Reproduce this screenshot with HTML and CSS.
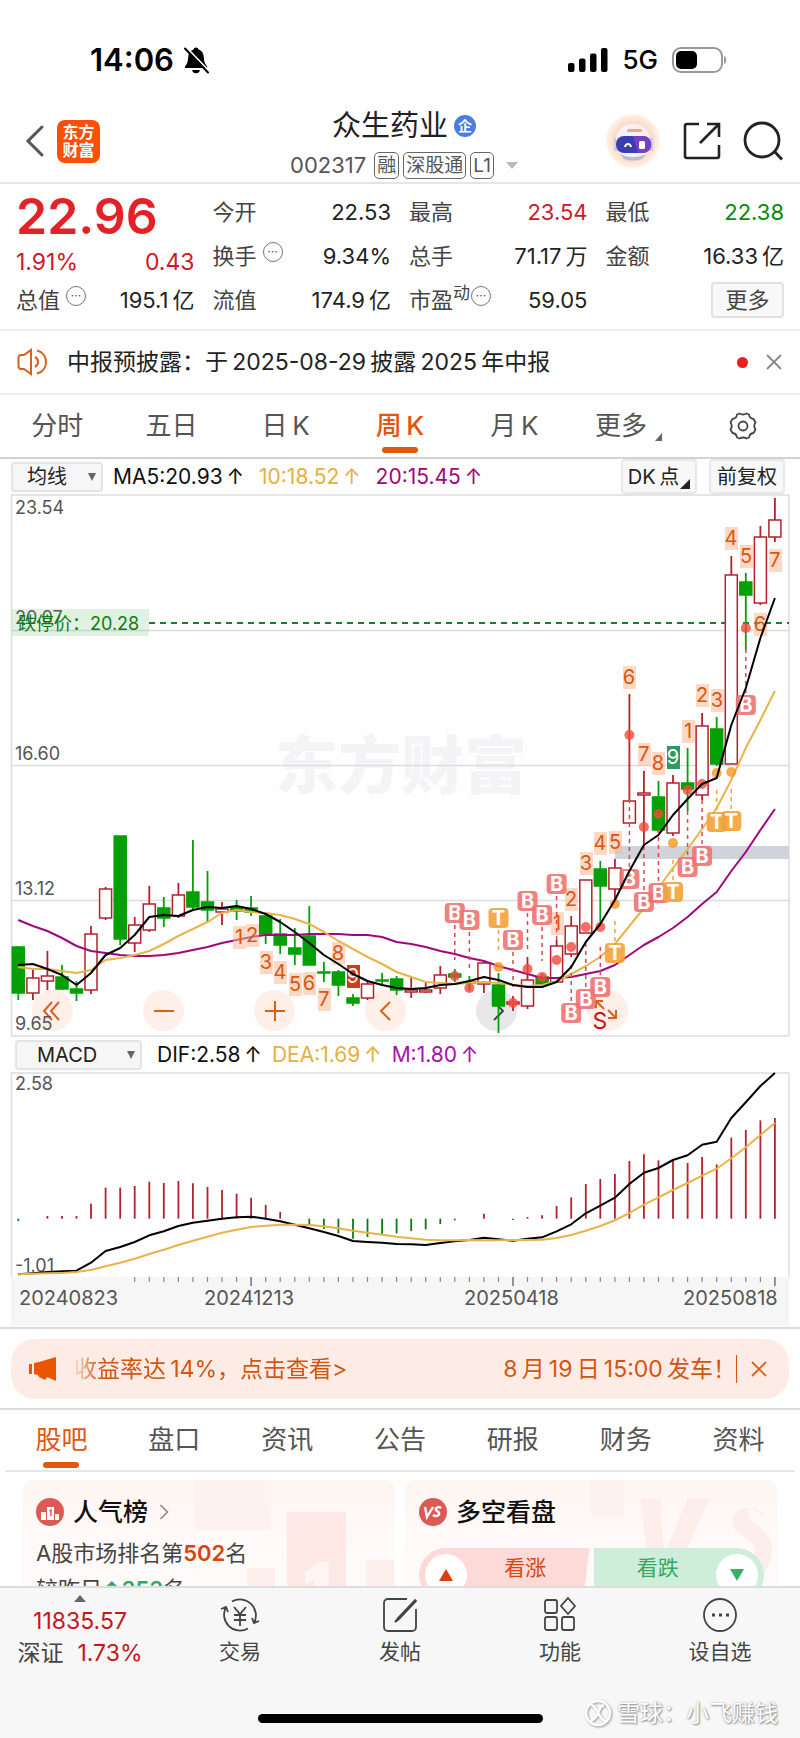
FILE: index.html
```html
<!DOCTYPE html>
<html lang="zh-CN">
<head>
<meta charset="utf-8">
<meta name="viewport" content="width=device-width, initial-scale=1">
<title>众生药业 002317</title>
<link rel="stylesheet" href="styles.css">
</head>
<body>
<div class="app">
  <div class="status">
    <div class="status-left">
      <span class="time">14:06</span>
      <svg class="bell" viewBox="0 0 28 28" width="28" height="28"><path d="M14 1.500c1.300 0 2.200.8 2.500 2 3.600 1.200 5.200 4.200 5.400 8.500.1 3.800 1 5.600 3.200 8.500v1.500H3v-1.500c2.200-2.900 3-4.700 3.100-8.500.2-4.300 1.800-7.300 5.400-8.500.3-1.200 1.200-2 2.500-2zM10 24h8c-.4 2-1.900 3.300-4 3.300S10.400 26 10 24z"/><path d="M5.500 2.500 27.500 25.500" stroke="#fefefe" stroke-width="1.800"/><path d="M3 2.500 26 26.500" stroke="#000" stroke-width="2" stroke-linecap="round"/></svg>
    </div>
    <div class="status-right">
      <svg viewBox="0 0 40 26" width="40" height="26"><rect x="0" y="16" width="6.500" height="9" rx="2"/><rect x="11" y="11.500" width="6.500" height="13.500" rx="2"/><rect x="22" y="6.500" width="6.500" height="18.500" rx="2"/><rect x="33" y="1" width="6.500" height="24" rx="2"/></svg>
      <span class="net">5G</span>
      <svg viewBox="0 0 56 26" width="56" height="26"><rect x="1" y="1" width="49" height="24" rx="8" fill="none" stroke="#999" stroke-width="2"/><path d="M52 9c3 .8 3 7.200 0 8z" fill="#999"/><rect x="4" y="4" width="21" height="18" rx="5"/></svg>
    </div>
  </div>

  <header class="header">
    <div class="header-side left">
      <button class="plain" aria-label="返回"><svg viewBox="0 0 20 34" width="20" height="34" fill="none" stroke="#555" stroke-width="3" stroke-linecap="round"><path d="M17 3 3 17l14 14"/></svg></button>
      <div class="logo"><span>东方</span><span>财富</span></div>
    </div>
    <div class="header-mid">
      <h1 class="name">众生药业<span class="corp">企</span></h1>
      <div class="code">002317<span class="tag first">融</span><span class="tag">深股通</span><span class="tag">L1</span><i class="tri-down"></i></div>
    </div>
    <div class="header-side right">
      <button class="plain" aria-label="智能助手"><svg viewBox="0 0 56 56" width="56" height="56"><defs><radialGradient id="halo"><stop offset=".7" stop-color="#fddcc8"/><stop offset="1" stop-color="#fff3ec"/></radialGradient></defs><circle cx="28" cy="28" r="27" fill="url(#halo)"/><path d="M9 25h6v13H9zM42 25h6v13h-6z" fill="#c9cbe0"/><path d="M28 11c11 0 17 7 17 17s-5 18-17 18-17-8-17-18 6-17 17-17z" fill="#f2f2f8"/><rect x="22" y="16" width="15" height="3" rx="1.500" fill="#f5a47c"/><path d="M15 41c7 4 19 4 26 0l-4 5c-5 2-13 2-18 0z" fill="#b9bed6"/><rect x="11" y="23" width="35" height="17" rx="8" fill="#3b3fae"/><path d="M28 23h10a8 8 0 0 1 0 17h-5z" fill="#8a3fc8" opacity=".8"/><path d="M20 34c1-4 5-4 6 0" fill="none" stroke="#fff" stroke-width="2"/><rect x="34" y="28" width="6" height="8" rx="1.500" fill="#fff"/></svg></button>
      <button class="plain" aria-label="分享"><svg viewBox="0 0 38 38" width="38" height="38" fill="none" stroke="#222" stroke-width="2.600"><path d="M16 2H4a2 2 0 0 0-2 2v30a2 2 0 0 0 2 2h30a2 2 0 0 0 2-2V23M17 21 36 2M24 2h12v13"/></svg></button>
      <button class="plain" aria-label="搜索"><svg viewBox="0 0 40 40" width="40" height="40" fill="none" stroke="#222" stroke-width="2.800"><circle cx="19" cy="19" r="17"/><path d="m31 30 8 8.500"/></svg></button>
    </div>
  </header>

  <main class="scroll">
    <section class="quote">
      <div class="price">22.96</div>
      <div class="cell"><span>今开</span><b>22.53</b></div>
      <div class="cell"><span>最高</span><b class="red">23.54</b></div>
      <div class="cell"><span>最低</span><b class="green">22.38</b></div>
      <div class="cell chg red"><b>1.91%</b><b>0.43</b></div>
      <div class="cell"><span>换手<i class="info">···</i></span><b>9.34%</b></div>
      <div class="cell"><span>总手</span><b>71.17&thinsp;万</b></div>
      <div class="cell"><span>金额</span><b>16.33&thinsp;亿</b></div>
      <div class="cell"><span>总值<i class="info">···</i></span><b>195.1&thinsp;亿</b></div>
      <div class="cell"><span>流值</span><b>174.9&thinsp;亿</b></div>
      <div class="cell"><span>市盈<sup>动</sup><i class="info">···</i></span><b>59.05</b></div>
      <div class="cell end"><button class="more">更多</button></div>
    </section>

    <section class="notice">
      <svg viewBox="0 0 32 28" width="32" height="28" fill="none" stroke="#d9601a" stroke-width="2"><path d="M14 2v24l-7-5H4a2.500 2.500 0 0 1-2.500-2.500v-9A2.500 2.500 0 0 1 4 7h3zM18 9c4 2 4 8 0 10M20 2.500c12 3 12 20 0 23"/></svg>
      <p>中报预披露：于&thinsp;2025-08-29&thinsp;披露&thinsp;2025&thinsp;年中报</p>
      <i class="dot"></i>
      <button class="plain" aria-label="关闭"><svg viewBox="0 0 16 16" width="16" height="16" stroke="#888" stroke-width="1.800"><path d="m1 1 14 14M15 1 1 15"/></svg></button>
    </section>

    <nav class="tabs period">
      <button>分时</button><button>五日</button><button>日&thinsp;K</button><button class="on">周&thinsp;K</button><button>月&thinsp;K</button>
      <button>更多<i class="corner"></i></button>
      <button aria-label="设置"><svg viewBox="0 0 30 30" width="30" height="30" fill="none" stroke="#444" stroke-width="1.800" stroke-linejoin="round"><path d="M11.500 2.500q3.500 2 7 0l2.500 1q.5 4 4.500 4.500l2 3.500q-2.500 3.500 0 7l-2 3.500q-4 .5-4.500 4.500l-2.500 1q-3.500-2-7 0l-2.500-1Q8.500 22.500 4.500 22l-2-3.500q2.500-3.500 0-7l2-3.500Q8.500 7.500 9 3.500z"/><circle cx="15" cy="15" r="4.500"/></svg></button>
    </nav>

    <section class="bar">
      <label class="pick ma"><select aria-label="主图指标"><option>均线</option></select><i></i></label>
      <span class="m5">MA5:20.93&thinsp;↑</span><span class="m10">10:18.52&thinsp;↑</span><span class="m20">20:15.45&thinsp;↑</span>
      <button class="opt push">DK&thinsp;点<i class="corner dark"></i></button>
      <button class="opt">前复权</button>
    </section>
    <div class="plot">
      <div class="tools">
        <button aria-label="最早"><svg viewBox="0 0 24 24"><path d="M11 3 3 12l8 9M18 3l-8 9 8 9"/></svg></button>
        <button aria-label="缩小"><svg viewBox="0 0 24 24"><path d="M2 12h20"/></svg></button>
        <button aria-label="放大"><svg viewBox="0 0 24 24"><path d="M2 12h20M12 2v20"/></svg></button>
        <button aria-label="向左"><svg viewBox="0 0 24 24"><path d="m16 3-9 9 9 9"/></svg></button>
        <button class="grey" aria-label="向右"><svg viewBox="0 0 24 24"><path d="m9 3 9 9-9 9"/></svg></button>
        <button aria-label="全屏"><svg viewBox="0 0 24 24"><path d="M8 10 0 2M0 9V2h7M12 11l7 7M12 19h8v-8"/></svg></button>
      </div>
      <svg id="kline" class="chart" viewBox="0 494 800 543" role="img" aria-label="周K线"></svg>
    </div>
    <section class="bar macd-bar">
      <label class="pick macd"><select aria-label="副图指标"><option>MACD</option></select><i></i></label>
      <span class="m5">DIF:2.58&thinsp;↑</span><span class="m10">DEA:1.69&thinsp;↑</span><span class="mm">M:1.80&thinsp;↑</span>
    </section>
    <svg id="macd" class="chart" viewBox="0 1072 800 254" role="img" aria-label="MACD"></svg>

    <section class="promo-wrap">
      <div class="promo">
        <svg viewBox="0 0 28 24" width="28" height="24" fill="#ea5504"><path d="M0 7h3v10H0zM5 6l5-1L27 0v24l-9-4-2 3-6-3-1-2-4-1z"/></svg>
        <p>收益率达&thinsp;14%，点击查看&gt;</p>
        <span class="when">8&thinsp;月&thinsp;19&thinsp;日&thinsp;15:00&thinsp;发车！</span>
        <button class="plain close" aria-label="关闭"><svg viewBox="0 0 16 16" width="16" height="16" stroke="#d9601a" stroke-width="1.800"><path d="m1 1 14 14M15 1 1 15"/></svg></button>
      </div>
    </section>

    <nav class="tabs info-tabs">
      <button class="on">股吧</button><button>盘口</button><button>资讯</button><button>公告</button><button>研报</button><button>财务</button><button>资料</button>
    </nav>

    <section class="cards">
      <article class="card">
        <svg class="deco" viewBox="0 0 200 155" width="200" height="155"><path d="M0 0h76v50H0z" fill="#fdf2ef"/><path d="M92 32h59v123H92z" fill="#fde8e5"/><path d="M52 88h28v67H52zM171 80h28v50h-28z" fill="#fdefec"/><path d="m110 92 14-10h10v62h-15v-44l-9 5z" fill="#fff5f2"/></svg>
        <h2><svg viewBox="0 0 28 28" width="28" height="28"><circle cx="14" cy="14" r="14" fill="#dc5a55"/><path d="M5 14h5v8H5zM11 9h7v13h-7zM19 16h4v6h-4z" fill="#fff"/><path d="m13.500 13 1.500-1v6" fill="none" stroke="#dc5a55" stroke-width="1.500"/></svg>人气榜<svg class="go" viewBox="0 0 10 16" width="10" height="16" fill="none" stroke="#888" stroke-width="1.600"><path d="m1.500 1 7 7-7 7"/></svg></h2>
        <p>A股市场排名第<strong>502</strong>名</p>
        <p>较昨日<em>↑353</em>名</p>
      </article>
      <article class="card">
        <svg class="deco" viewBox="0 0 200 155" width="200" height="155"><path d="M12 0h34v36H12z" fill="#fdf2ef"/><path d="M62 18h20l4 56 24-56h22L96 98H72zM182 34c-16-14-34 0-26 14 8 10 26 12 20 30-4 12-24 14-38 4l-6 16c30 16 62 2 62-28 0-24-28-26-24-38 4-6 10-4 16 2z" fill="#fdeeeb"/></svg>
        <h2><svg viewBox="0 0 28 28" width="28" height="28"><circle cx="14" cy="14" r="14" fill="#dc5a55"/><path d="m6 9 2 10 6-10M22 10c-3-2-6 0-5 2 1 1.500 4 2 3 4.500-1 2-4 2-6 .5" fill="none" stroke="#fff" stroke-width="2.400"/></svg>多空看盘</h2>
        <div class="vote">
          <button class="up"><i></i><span>看涨</span></button>
          <button class="down"><span>看跌</span><i></i></button>
        </div>
      </article>
    </section>
  </main>

  <footer class="footer">
    <div class="dock">
      <button class="index"><i></i><b>11835.57</b><span>深证<b>1.73%</b></span></button>
      <button><svg viewBox="0 0 40 36" width="40" height="36"><path d="M12 4.500A16 16 0 0 1 34 26M28 31.500A16 16 0 0 1 6 10M1 12l5-2 2 5M32 21l2 5 5-2M14 10l6 7 6-7M20 17v12M14 18h12M14 23h12"/></svg>交易</button>
      <button><svg viewBox="0 0 36 36" width="36" height="36"><path d="M25 2H6a4 4 0 0 0-4 4v24a4 4 0 0 0 4 4h24a4 4 0 0 0 4-4V12"/><path d="M33 3 16 21l-3 4 4-3L34 4z" fill="#444"/></svg>发帖</button>
      <button><svg viewBox="0 0 36 36" width="36" height="36"><rect x="3" y="3" width="12" height="13" rx="2"/><path d="m26 1 7 8-7 8-7-8z"/><rect x="3" y="20" width="12" height="13" rx="2"/><rect x="20" y="20" width="12" height="13" rx="2"/></svg>功能</button>
      <button><svg viewBox="0 0 36 36" width="36" height="36"><circle cx="18" cy="18" r="16"/><path d="M10 18h3M17 18h3M24 18h3" stroke-width="3"/></svg>设自选</button>
    </div>
    <div class="home"></div>
    <div class="mark"><svg viewBox="0 0 28 28" width="28" height="28" fill="none" stroke="#fff" stroke-width="2.500"><circle cx="14" cy="14" r="12"/><path d="M7 6c4 0 5 5 7 8s4 8 8 8M20 6c-4 1-5 5-6 8s-4 6-7 8"/></svg>雪球：小飞赚钱</div>
  </footer>
</div>
<script src="chart.js"></script>
</body>
</html>
```

FILE: styles.css
```css
* { box-sizing: border-box; margin: 0; padding: 0; }
body { background: #fefefe; color: #222; font-family: Inter, "Noto Sans CJK SC", sans-serif; font-size: 22px; line-height: 30px; }
button, select { font: inherit; color: inherit; background: none; border: 0; cursor: pointer; }
b, h1, h2, i, em { font-weight: 400; font-style: normal; }
svg { display: block; flex: none; }
.app { display: flex; flex-direction: column; height: 100vh; overflow: hidden; }
.plain { display: flex; }
.red { color: #cc1a26; }
.green { color: #0a8a0a; }

.status { display: flex; justify-content: space-between; align-items: center; padding: 14px 72px 0 90px; height: 106px; color: #000; }
.status-left, .status-right { display: flex; align-items: center; gap: 8px; }
.status-right { gap: 14px; }
.time { font-size: 31px; font-weight: 600; }
.net { font-size: 26px; font-weight: 500; }

.header { display: flex; justify-content: space-between; height: 78px; padding: 0 17px 6px; border-bottom: 2px solid #e6e6e6; }
.header-side { display: flex; align-items: center; gap: 12px; flex: 1; }
.header-side.left { padding-left: 8px; }
.header-side.right { justify-content: flex-end; gap: 22px; }
.logo { display: flex; flex-direction: column; align-items: center; justify-content: center; width: 43px; height: 43px; border-radius: 8px; background: #fb4f0a; color: #fff; font-size: 16px; font-weight: 700; line-height: 18px; }
.header-mid { display: flex; flex-direction: column; align-items: center; gap: 4px; }
.name { display: flex; align-items: center; gap: 6px; font-size: 29px; line-height: 40px; }
.corp { width: 22px; height: 22px; border-radius: 50%; background: #4a7de0; color: #fff; font-size: 14px; line-height: 21px; text-align: center; font-weight: 700; }
.code { display: flex; align-items: center; gap: 4px; line-height: 30px; font-size: 22px; color: #555; }
.tag { border: 1px solid #666; border-radius: 5px; padding: 0 2px; line-height: 25px; font-size: 19px; }
.tag.first { margin-left: 4px; }
.tri-down { border: 6px solid transparent; border-top: 7px solid #bbb; border-bottom: 0; margin-left: 8px; }

.scroll { flex: 1; min-height: 0; overflow-y: auto; scrollbar-width: none; }
.quote { display: grid; grid-template-columns: repeat(4, 1fr); column-gap: 18px; grid-auto-rows: 44px; padding: 6px 16px 7px; border-bottom: 2px solid #ececec; }
.price { font-size: 50px; font-weight: 600; line-height: 52px; color: #e32227; }
.cell { display: flex; justify-content: space-between; align-items: center; color: #444; }
.cell b { color: #222; }
.cell.red b, .cell b.red { color: #cc1a26; }
.cell b.green { color: #0a8a0a; }
.chg { padding-top: 12px; font-size: 23px; }
.cell span { display: flex; align-items: center; }
.info { width: 20px; height: 20px; margin: 0 0 8px 6px; border: 1px solid #777; border-radius: 50%; font-size: 12px; line-height: 17px; text-align: center; color: #555; }
.cell sup { font-size: 17px; line-height: 20px; margin-bottom: 14px; }
.cell sup + .info { margin-left: 1px; }
.cell.end { justify-content: flex-end; }
.more { width: 73px; height: 36px; border: 2px solid #e2e2e2; border-radius: 4px; background: #f8f8f8; }

.notice { display: flex; align-items: center; height: 64px; padding: 0 18px 0 17px; gap: 18px; border-bottom: 2px solid #ececec; font-size: 23px; }
.notice p { flex: 1; }
.dot { width: 11px; height: 11px; border-radius: 50%; background: #f01d1d; }

.tabs { display: grid; grid-template-columns: repeat(7, 1fr); height: 64px; border-bottom: 2px solid #d2d2d2; }
.tabs button { position: relative; display: flex; align-items: center; justify-content: center; font-size: 26px; color: #555; }
.tabs .on { color: #e2560f; }
.period .on { font-weight: 500; }
.tabs .on::after { content: ""; position: absolute; bottom: 4px; width: 36px; height: 6px; border-radius: 3px; background: #e2560f; }
.corner { border-left: 7px solid transparent; border-bottom: 8px solid #666; align-self: flex-end; margin: 0 0 16px 8px; }
.corner.dark { border-left-width: 10px; border-bottom: 10px solid #222; margin: 0 0 3px 1px; }

.bar { display: flex; align-items: center; height: 35px; padding: 0 15px 0 11px; font-size: 20px; white-space: nowrap; }
.bar span { font-size: 21px; }
.pick { position: relative; display: flex; height: 30px; border: 2px solid #e4e4e4; border-radius: 4px; background: #f6f6f6; }
.pick select { appearance: none; width: 100%; padding-left: 14px; line-height: 26px; }
.pick i { position: absolute; right: 5px; top: 9px; border: 4px solid transparent; border-top: 8px solid #666; border-bottom: 0; }
.ma { width: 92px; margin-right: 10px; }
.m5 { color: #111; margin-right: 15px; }
.m10 { color: #e3b13c; margin-right: 15px; }
.m20 { color: #a0077c; }
.mm { color: #a80fb0; }
.opt { display: flex; align-items: center; justify-content: center; width: 76px; height: 35px; border: 2px solid #e8e8e8; border-radius: 4px; background: #f8f8f8; }
.opt.push { margin: 0 12px 0 auto; }
.macd-bar { padding-left: 15px; }
.macd { width: 127px; margin-right: 15px; }
.macd select { padding-left: 20px; }
.macd-bar .m5, .macd-bar .m10 { margin-right: 10px; }

.plot { position: relative; }
.chart { position: relative; width: 100%; height: auto; pointer-events: none; }
.chart text { font-size: 18px; fill: #555; }
.chart .date { font-size: 20px; }
.chart .num { fill: #d9560f; font-size: 20px; text-anchor: middle; }
.chart .inv { fill: #fff; }
.chart .badge { fill: #fff; font-size: 20px; font-weight: 700; text-anchor: middle; }
.chart .sell { fill: #c4161c; font-size: 23px; text-anchor: middle; }
.chart .limit { fill: #0a7d12; }
.chart .wm { fill: #f4f4f6; font-size: 63px; font-weight: 900; text-anchor: middle; }
.tools { position: absolute; left: 4%; right: 21.500%; bottom: 6px; display: flex; justify-content: space-between; }
.tools button { display: flex; align-items: center; justify-content: center; width: 41px; height: 41px; border-radius: 50%; background: #feefe8; }
.tools svg { width: 24px; height: 24px; overflow: visible; fill: none; stroke: #d9601a; stroke-width: 2; }
.tools .grey { background: #e8e8e8; }
.tools .grey svg { stroke: #444; }

.promo-wrap { margin-top: 1px; padding: 10px 11px 9px; border-top: 2px solid #dcdcdc; border-bottom: 2px solid #dcdcdc; }
.promo { display: flex; align-items: center; height: 60px; border-radius: 24px; background: #fdece5; color: #d4540f; padding: 0 22px 0 18px; font-size: 23px; }
.promo p { flex: 1; display: flex; justify-content: flex-start; margin-left: 17px; white-space: pre; -webkit-mask-image: linear-gradient(90deg, rgba(0, 0, 0, .1), #000 26px); mask-image: linear-gradient(90deg, rgba(0, 0, 0, .1), #000 26px); }
.close { border-left: 1px solid #d4540f; padding: 6px 0 6px 14px; }

.info-tabs { margin: 0 5px; height: 62px; border-color: #e6e6e6; }
.info-tabs .on::after { bottom: 2px; }

.cards { display: grid; grid-template-columns: 1fr 1fr; gap: 10px; padding: 8px 22px; }
.card { position: relative; min-height: 190px; padding: 14px; border-radius: 10px; background: linear-gradient(#fef6f2, #fffafa 80px); }
.card > * { position: relative; }
.card .deco { position: absolute; right: 0; top: 0; }
.card h2 { display: flex; align-items: center; gap: 9px; font-size: 25px; line-height: 36px; font-weight: 500; color: #111; }
.go { margin-left: 2px; }
.card p { font-size: 22px; line-height: 36px; margin-top: 5px; color: #444; }
.card p + p { margin-top: 0; }
.card strong { color: #d4450f; font-weight: 600; }
.card em { color: #2fa866; font-weight: 600; }
.vote { display: flex; gap: 4px; margin-top: 18px; height: 54px; }
.vote button { display: flex; flex: 1; padding: 6px; font-size: 21px; line-height: 28px; }
.vote span { flex: 1; }
.vote i { display: flex; align-items: center; justify-content: center; width: 42px; height: 42px; border-radius: 50%; background: #fff; }
.vote i::after { content: ""; border: 7px solid transparent; }
.up { background: #fdd9d7; border-radius: 27px 0 0 27px; color: #d9450f; clip-path: polygon(0 0, 100% 0, 96% 100%, 0 100%); }
.up i::after { border-bottom: 12px solid #d9400f; border-top: 0; }
.down { background: #cfeeda; border-radius: 0 27px 27px 0; color: #35a868; }
.down i::after { border-top: 12px solid #35b064; border-bottom: 0; }

.footer { position: relative; background: #f7f7f7; border-top: 2px solid #ddd; }
.dock { display: grid; grid-template-columns: repeat(5, 1fr); }
.dock button { display: flex; flex-direction: column; align-items: center; gap: 4px; padding-top: 9px; font-size: 21px; line-height: 30px; color: #444; }
.dock button > svg { height: 36px; fill: none; stroke: #444; stroke-width: 1.800; }
.dock .index { gap: 2px; padding-top: 7px; font-size: 23px; }
.dock b { color: #c4161c; }
.index span { display: flex; gap: 14px; }
.index i { border: 6px solid transparent; border-bottom: 7px solid #666; border-top: 0; margin-bottom: 2px; }
.home { width: 285px; height: 9px; margin: 46px auto 15px; border-radius: 5px; background: #000; }
.mark { position: absolute; right: 22px; bottom: 10px; display: flex; align-items: center; gap: 5px; font-size: 23px; color: #fff; text-shadow: 1px 1px 2px #888, 0 0 2px #aaa; }
.mark svg { filter: drop-shadow(1px 1px 1px #999); }
```

FILE: chart.js
```js
const STEP = 14.55;
const X0 = 18.3;
const px = i => (X0 + STEP * i).toFixed(1);
const RED = '#b5202c';
const GREEN = '#05a005';

// direction, high, body top, body bottom, low
const candles = [
  ['d',946,947,993,1000],['u',970,978,993,1000],['u',951,976,981,990],['d',965,977,989,990],['d',981,989,993,1001],
  ['u',926,934,990,994],['u',887,889,918,920],['d',836,836,939,945],['u',917,925,943,952],['u',886,904,930,932],
  ['d',897,908,918,927],['u',883,895,916,918],['d',840,892,907,910],['d',871,902,910,923],['u',902,909,912,925],
  ['d',900,907,911,920],['d',896,908,912,916],['d',912,916,934,944],['d',919,934,945,954],['d',928,948,954,965],
  ['d',906,936,965,965],['d',962,972,973,982],['d',970,972,985,996],['d',994,998,1003,1006],['u',982,984,998,1000],
  ['d',973,980,981,984],['d',976,979,990,995],['u',978,990,992,998],['u',981,990,992,993],['u',966,975,988,994],
  ['d',969,974,977,982],['d',976,982,983,991],['u',961,963,984,993],['d',973,985,1006,1033],['u',996,1002,1004,1011],
  ['u',957,980,1006,1009],['d',974,977,984,984],['u',940,946,982,982],['u',916,926,954,957],['u',880,880,933,933],
  ['d',861,869,886,922],['u',859,868,889,900],['u',694,801,823,823],['u',771,793,795,845],['d',781,797,830,833],
  ['u',775,783,833,836],['d',748,783,789,811],['u',713,726,795,800],['d',717,729,764,766],['u',556,575,764,764],
  ['d',573,582,595,650],['u',526,537,603,605],['u',498,520,537,542]
];
const ma5 = [965,964,969,975,985,973,955,948,935,917,915,916,910,907,908,906,909,914,922,932,943,955,964,974,981,985,988,989,988,985,984,981,977,980,985,987,987,982,967,942,924,900,871,845,835,815,799,784,778,725,688,638,598];
const ma10 = [967,969,969,971,973,970,960,958,955,951,944,936,929,922,913,910,912,913,915,919,924,932,941,949,957,964,972,977,982,983,984,983,982,983,985,986,985,981,974,966,957,944,926,908,888,868,849,829,808,780,748,720,691];
const ma20 = [920,926,931,938,946,951,953,955,956,956,955,953,950,947,943,940,937,935,935,935,934,934,934,935,935,937,942,944,947,951,954,958,961,966,970,974,978,978,977,974,971,965,955,945,937,928,917,904,892,871,852,830,809];
const counts = [
  [1,239,937],[2,252,935],[3,266,962],[4,280,972],[5,295,984],[6,309,983],[7,324,999],[8,338,953],[9,353,976,'#cf3e14'],
  [1,557,923],[2,571,899],[3,586,863],[4,600,843],[5,615,842],[6,629,677],[7,644,754],[8,658,763],[9,673,757,'#2f9a5f'],
  [1,688,731],[2,702,695],[3,717,700],[4,731,538],[5,746,556],[6,760,624],[7,775,560]
];
// letter, candle index, badge y, signal dot y
const signals = [
  ['B',30,913,976],['B',31,920,988],['T',33,918,967],['B',34,940,1003],['B',35,901,969],['B',36,915,977],['B',37,884,960],
  ['B',38,1013,947],['B',39,999,927],['B',40,987,927],['T',41,953,904],['B',42,879,735],['B',43,902,827],['B',44,893,814],
  ['T',45,892,843],['B',46,867,790],['B',47,856,784],['T',48,822,773],['T',49,821,772],['B',50,705,628]
];

const line = (values, color, y = v => v, w = 2) =>
  `<polyline points="${values.map((v, i) => px(i) + ',' + y(v).toFixed(1)).join(' ')}" fill="none" stroke="${color}" stroke-width="${w}" stroke-linejoin="round"/>`;
const seg = (x1, y1, x2, y2, color, w = 1.5, extra = '') =>
  `<line x1="${x1}" y1="${y1}" x2="${x2}" y2="${y2}" stroke="${color}" stroke-width="${w}" ${extra}/>`;

function drawKline() {
  let s = '<text class="wm" x="401" y="788">东方财富</text>';
  for (const y of [495, 630.5, 765.5, 900.5, 1036]) s += seg(11, y, 789, y, '#dcdde0');
  s += seg(11.5, 495, 11.5, 1036, '#dcdde0') + seg(789, 495, 789, 1036, '#dcdde0');
  s += '<rect x="615" y="846" width="174" height="13" fill="#d0d3da"/>';
  s += seg(149, 623, 789, 623, '#1d7a2a', 2, 'stroke-dasharray="6 5"');
  s += '<text x="15" y="514">23.54</text><text x="15" y="624">20.07</text><text x="15" y="760">16.60</text><text x="15" y="895">13.12</text><text x="15" y="1030">9.65</text>';
  candles.forEach(([dir, high, top, bottom, low], i) => {
    const x = +px(i);
    const up = dir === 'u';
    const c = up ? RED : GREEN;
    // wicks run through a body that is a bare line, as a cross
    if (bottom - top < 4) s += seg(x, high, x, low, c, 1.8);
    else s += seg(x, high, x, top, c, 1.8) + seg(x, bottom, x, low, c, 1.8);
    s += `<rect x="${x - 6}" y="${top}" width="12" height="${Math.max(bottom - top, 1)}" fill="${up ? '#fff' : c}" stroke="${c}" stroke-width="1.500"/>`;
  });
  s += line(ma20, '#a0077c') + line(ma10, '#eab34a');
  for (const [n, x, y, fill] of counts) {
    s += `<rect x="${x - 6}" y="${y - 11}" width="13" height="23" fill="${fill || '#f9b896'}" opacity="${fill ? 1 : .55}"/>`;
    s += `<text class="num${fill ? ' inv' : ''}" x="${x}" y="${y + 7}">${n}</text>`;
  }
  for (const [letter, i, y, dot] of signals) {
    const x = +px(i);
    const buy = letter === 'B';
    const dir = dot > y ? 1 : -1;
    const color = buy ? '#ee7370' : '#f4a23a';
    s += seg(x, y + 12 * dir, x, dot - 16 * dir, buy ? '#d9484f' : '#f4a23a', 1.5, 'stroke-dasharray="4 4"');
    s += `<circle cx="${x}" cy="${dot}" r="5" fill="${buy ? '#f2493c' : '#f7951d'}" opacity=".8"/>`;
    s += `<rect x="${x - 10}" y="${y - 10}" width="20" height="20" rx="4" fill="${color}" opacity=".9"/>`;
    s += `<text class="badge" x="${x}" y="${y + 7}">${letter}</text>`;
  }
  s += line(ma5, '#000');
  s += '<text class="sell" x="600" y="1029">S</text>';
  s += '<rect x="12" y="609" width="137" height="27" fill="#48b64e" opacity=".16"/><text class="limit" x="18" y="630">跌停价：20.28</text>';
  document.getElementById('kline').innerHTML = s;
}

const bars = [573,566,558,558,558,521,473,473,468,455,459,453,460,471,480,491,503,525,546,566,582,597,610,626,621,613,610,603,598,582,571,566,551,566,570,561,556,528,502,462,447,432,393,373,391,391,399,381,403,323,300,271,264];
const dif = [733,730,726,724,722,698,663,651,636,616,604,588,578,572,566,562,560,566,574,584,595,606,618,633,636,638,642,643,645,639,634,630,623,628,632,626,622,604,583,550,527,503,462,428,414,390,376,344,335,264,217,168,129];
const dea = [733,731,730,729,726,720,709,698,686,672,659,645,632,620,608,599,591,587,584,584,585,589,595,602,608,614,620,625,629,631,631,630,631,631,630,630,629,624,615,602,588,571,549,524,502,480,459,437,416,385,352,315,279];

function drawMacd() {
  const y = v => 1030 + v / 3;
  let s = '<rect x="11" y="1277" width="778" height="49" fill="#f6f6f6"/>';
  s += seg(11, 1073, 789, 1073, '#dcdde0') + seg(11.5, 1073, 11.5, 1277, '#dcdde0') + seg(789, 1073, 789, 1277, '#dcdde0');
  s += '<text x="15" y="1090">2.58</text><text x="15" y="1272">-1.01</text>';
  bars.forEach((v, i) => {
    if (v !== 566) s += seg(px(i), y(566), px(i), y(v), v < 566 ? '#b5202c' : '#0a7d12', 1.8);
  });
  s += line(dif, '#000', y) + line(dea, '#eab34a', y);
  for (let i = 8; i < 53; i++) {
    const major = i === 16 || i === 34 || i === 52;
    s += seg(px(i), 1277, px(i), major ? 1286 : 1282, '#888', major ? 1.8 : 1.2);
  }
  for (const [x, t] of [[19, '20240823'], [204, '20241213'], [464, '20250418'], [683, '20250818']])
    s += `<text class="date" x="${x}" y="1305">${t}</text>`;
  document.getElementById('macd').innerHTML = s;
}

drawKline();
drawMacd();
```
